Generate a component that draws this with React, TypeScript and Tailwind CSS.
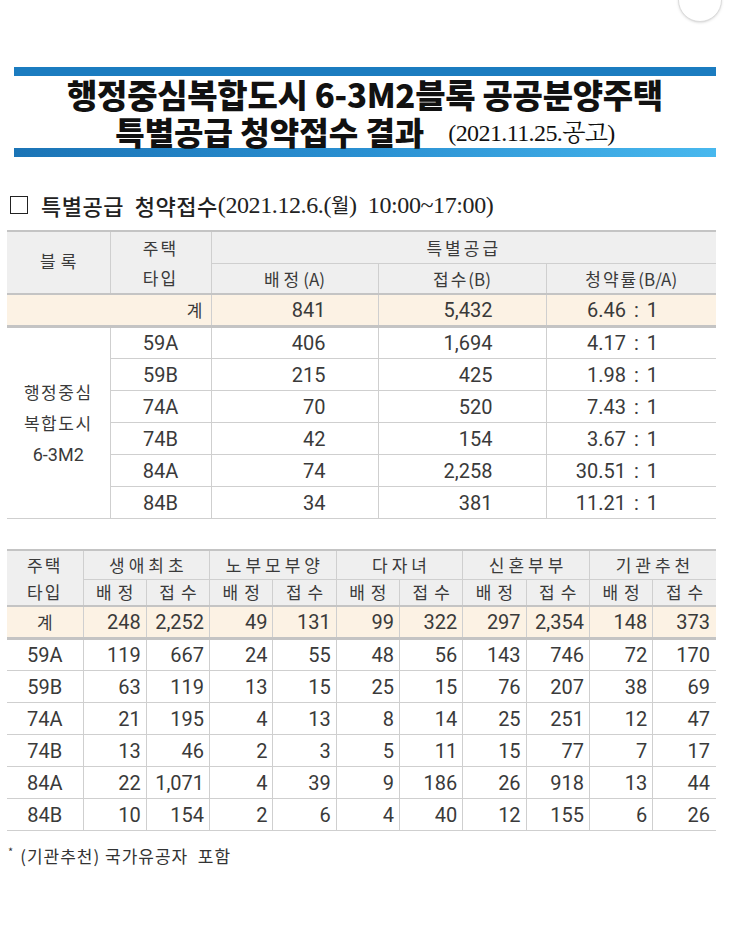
import React from 'react';

const summary = [
  { type: '59A', a: '406', b: '1,694', r: '4.17' },
  { type: '59B', a: '215', b: '425', r: '1.98' },
  { type: '74A', a: '70', b: '520', r: '7.43' },
  { type: '74B', a: '42', b: '154', r: '3.67' },
  { type: '84A', a: '74', b: '2,258', r: '30.51' },
  { type: '84B', a: '34', b: '381', r: '11.21' },
];

const detail = [
  ['59A', '119', '667', '24', '55', '48', '56', '143', '746', '72', '170'],
  ['59B', '63', '119', '13', '15', '25', '15', '76', '207', '38', '69'],
  ['74A', '21', '195', '4', '13', '8', '14', '25', '251', '12', '47'],
  ['74B', '13', '46', '2', '3', '5', '11', '15', '77', '7', '17'],
  ['84A', '22', '1,071', '4', '39', '9', '186', '26', '918', '13', '44'],
  ['84B', '10', '154', '2', '6', '4', '40', '12', '155', '6', '26'],
];

const totals = ['248', '2,252', '49', '131', '99', '322', '297', '2,354', '148', '373'];
const groups = ['생애최초', '노부모부양', '다자녀', '신혼부부', '기관추천'];

const num = "font-['Liberation_Sans_Narrow',Roboto,'Noto_Sans_CJK_KR',sans-serif]";
const kr = "font-['Noto_Sans_CJK_KR',sans-serif]";

const Ratio = ({ v }: { v: string }) => (
  <span>
    {v}
    <span className="inline-block mx-[8px]">:</span>1
  </span>
);

export default function App() {
  return (
    <div className="relative w-[743px] h-[925px] bg-white text-[#3a3a3a] overflow-hidden">
      {/* corner button */}
      <div className="absolute left-[678px] top-[-22px] w-[44px] h-[44px] rounded-full border border-[#dcdcdc] bg-white shadow-sm" />

      {/* Title */}
      <div className="pt-[67px] pl-[14px] w-[716px]">
        <div className="h-[9px] bg-[#1b7cc0]" />
        <div className={`${kr} h-[37px] flex items-center justify-center text-[#111] font-black text-[33px] leading-none tracking-[-0.3px] whitespace-nowrap`}>
          행정중심복합도시 6-3M2블록 공공분양주택
        </div>
        <div className="h-[35px] flex items-center justify-center text-[#111] whitespace-nowrap">
          <span className={`${kr} font-black text-[32px] leading-none`}>특별공급 청약접수 결과</span>
          <span className="ml-[24px] mt-[4px] font-['Liberation_Serif','Noto_Serif_CJK_KR',serif] text-[24px] leading-none tracking-[-0.6px]">
            (2021.11.25.공고)
          </span>
        </div>
        <div className="h-[9px] bg-gradient-to-r from-[#1b74b6] via-[#2a90d2] to-[#48b8ee]" />
      </div>

      {/* Section heading */}
      <div className="mt-[36px] pl-[10px] flex items-center h-[24px] text-[#222] whitespace-nowrap">
        <span className="inline-block w-[18px] h-[18px] border-[1.5px] border-[#222] mr-[13px]" />
        <span className={`${kr} font-medium text-[22px] tracking-[0.5px]`}>특별공급&nbsp;&nbsp;청약접수</span>
        <span className="font-['Liberation_Serif','Noto_Sans_CJK_KR',serif] text-[24px] tracking-[-0.4px]">
          (2021.12.6.(<span className={`${kr} text-[20px]`}>월</span>)&nbsp; 10:00~17:00)
        </span>
      </div>

      {/* Table 1 */}
      <table className={`ml-[7px] mt-[13px] w-[709px] table-fixed border-collapse ${num} text-[20px]`}>
        <colgroup>
          <col className="w-[103px]" />
          <col className="w-[101px]" />
          <col className="w-[167px]" />
          <col className="w-[168px]" />
          <col className="w-[170px]" />
        </colgroup>
        <tbody>
          <tr className="h-[32px] bg-[#efefef] border-t-2 border-[#c4c4c4]">
            <td rowSpan={2} className={`${kr} text-center text-[17px] tracking-[5px] pl-[5px] border-r border-[#cfcfcf] pb-[4px]`}>블록</td>
            <td rowSpan={2} className={`${kr} text-center text-[17px] leading-[30px] tracking-[2px] border-r border-[#cfcfcf]`}>
              주택<br />타입
            </td>
            <td colSpan={3} className={`${kr} text-center text-[17px] tracking-[3px] border-b border-[#cfcfcf]`}>특별공급</td>
          </tr>
          <tr className="h-[31px] bg-[#efefef]">
            <td className={`${kr} text-center text-[17px] border-r border-[#cfcfcf]`}>
              <span className="tracking-[4px]">배정</span>(A)
            </td>
            <td className={`${kr} text-center text-[17px] border-r border-[#cfcfcf]`}>
              <span className="tracking-[2px]">접수</span>(B)
            </td>
            <td className={`${kr} text-center text-[17px]`}>
              <span className="tracking-[2px]">청약률</span>(B/A)
            </td>
          </tr>
          <tr className="h-[32px] bg-[#fcf2e4] border-t-2 border-b-[3px] border-[#c4c4c4]">
            <td colSpan={2} className={`${kr} text-right text-[17px] pr-[8px] border-r border-[#cfcfcf]`}>계</td>
            <td className="text-right pr-[52px] border-r border-[#cfcfcf]">841</td>
            <td className="text-right pr-[53px] border-r border-[#cfcfcf]">5,432</td>
            <td className="text-right pr-[58px]"><Ratio v="6.46" /></td>
          </tr>
          {summary.map((row, i) => (
            <tr key={row.type} className="h-[32px] border-b border-[#cfcfcf]">
              {i === 0 && (
                <td rowSpan={6} className={`${kr} text-center text-[17px] leading-[31px] tracking-[1.5px] border-r border-[#cfcfcf]`}>
                  행정중심<br />복합도시<br />
                  <span className={num + ' text-[18px] tracking-normal'}>6-3M2</span>
                </td>
              )}
              <td className="text-center border-r border-[#cfcfcf]">{row.type}</td>
              <td className="text-right pr-[52px] border-r border-[#cfcfcf]">{row.a}</td>
              <td className="text-right pr-[53px] border-r border-[#cfcfcf]">{row.b}</td>
              <td className="text-right pr-[58px]"><Ratio v={row.r} /></td>
            </tr>
          ))}
        </tbody>
      </table>

      {/* Table 2 */}
      <table className={`ml-[7px] mt-[30px] w-[709px] table-fixed border-collapse ${num} text-[20px]`}>
        <colgroup>
          <col className="w-[76px]" />
          {totals.map((_, i) => (
            <col key={i} className="w-[63.3px]" />
          ))}
        </colgroup>
        <tbody>
          <tr className="h-[29px] bg-[#efefef] border-t-2 border-[#c4c4c4]">
            <td rowSpan={2} className={`${kr} text-center text-[17px] leading-[27px] tracking-[2px] border-r border-[#cfcfcf]`}>
              주택<br />타입
            </td>
            {groups.map((g, i) => (
              <td
                key={g}
                colSpan={2}
                className={`${kr} text-center text-[17px] leading-[24px] tracking-[4px] pl-[4px] border-b border-[#cfcfcf] ${i < 4 ? 'border-r' : ''}`}
              >
                {g}
              </td>
            ))}
          </tr>
          <tr className="h-[27px] bg-[#efefef]">
            {totals.map((_, i) => (
              <td key={i} className={`${kr} text-center text-[17px] leading-[24px] tracking-[6px] pl-[6px] ${i < 9 ? 'border-r border-[#cfcfcf]' : ''}`}>
                {i % 2 === 0 ? '배정' : '접수'}
              </td>
            ))}
          </tr>
          <tr className="h-[31px] bg-[#fcf2e4] border-t-2 border-b-[3px] border-[#c4c4c4]">
            <td className={`${kr} text-center text-[17px] border-r border-[#cfcfcf]`}>계</td>
            {totals.map((v, i) => (
              <td key={i} className={`text-right pr-[5px] ${i < 9 ? 'border-r border-[#cfcfcf]' : 'pr-[6px]'}`}>
                {v}
              </td>
            ))}
          </tr>
          {detail.map((row) => (
            <tr key={row[0]} className="h-[32px] border-b border-[#cfcfcf]">
              <td className="text-center border-r border-[#cfcfcf]">{row[0]}</td>
              {row.slice(1).map((v, i) => (
                <td key={i} className={`text-right pr-[5px] ${i < 9 ? 'border-r border-[#cfcfcf]' : 'pr-[6px]'}`}>
                  {v}
                </td>
              ))}
            </tr>
          ))}
        </tbody>
      </table>

      {/* Footnote */}
      <div className={`${kr} mt-[12px] pl-[8px] text-[17px] text-[#333] tracking-[1px] whitespace-nowrap`}>
        <span className="text-[11px] align-top mr-[6px]">*</span>(기관추천) 국가유공자&nbsp; 포함
      </div>
    </div>
  );
}
